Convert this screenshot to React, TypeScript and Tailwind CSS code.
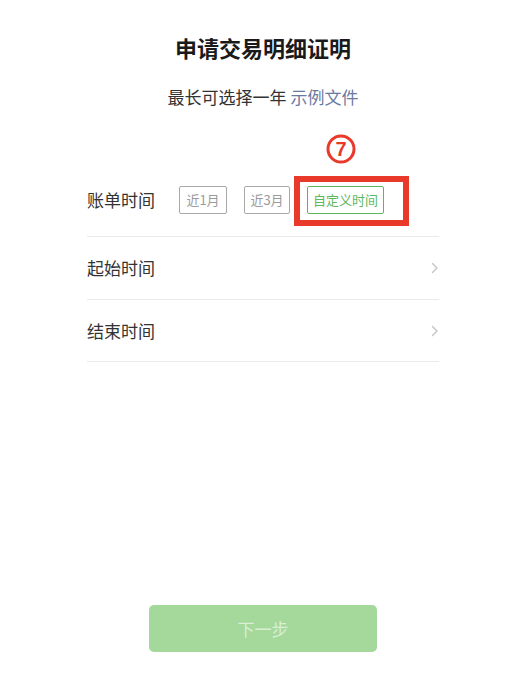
import React from 'react';

const font = { fontFamily: '"Noto Sans CJK SC", "Noto Sans", sans-serif' };

const Chevron: React.FC = () => (
  <svg width="8" height="12" viewBox="0 0 8 12" fill="none">
    <polyline points="1.5,1.5 6,6 1.5,10.5" stroke="#c8c8c8" strokeWidth="1.5" strokeLinecap="round" strokeLinejoin="round" />
  </svg>
);

const Chip: React.FC<{ label: string; width: string; active?: boolean }> = ({ label, width, active }) => (
  <div
    className={
      active
        ? `${width} h-[28px] flex items-center justify-center border border-[#5cb85c] text-[#5cb85c] text-[13px] rounded-[2px]`
        : `${width} h-[28px] flex items-center justify-center border border-[#a8a8a8] text-[#9a9a9a] text-[13px] rounded-[2px]`
    }
  >
    {label}
  </div>
);

export default function App() {
  return (
    <div className="w-full h-[688px] bg-white overflow-hidden" style={font}>
      <div className="ml-[11px] w-[504px] flex flex-col items-center">
        <h1 className="pt-[32px] text-[22px] leading-[30px] font-bold text-[#1a1a1a]">申请交易明细证明</h1>
        <p className="mt-[23px] text-[17px] leading-[24px] text-[#333333]">
          最长可选择一年 <span className="text-[#6b7aa1]">示例文件</span>
        </p>

        <div className="mt-[54px] w-[352px] flex flex-col">
          <div className="h-[74px] flex items-center border-b border-[#ebebeb]">
            <span className="text-[17px] text-[#333333] w-[70px]">账单时间</span>
            <div className="ml-[22px] flex items-center gap-[17px]">
              <Chip label="近1月" width="w-[48px]" />
              <Chip label="近3月" width="w-[46px]" />
              <div className="relative">
                <Chip label="自定义时间" width="w-[77px]" active />
                <div className="absolute left-[-13px] top-[-10px] w-[115px] h-[50px] border-[6px] border-[#e8392b]" />
                <svg className="absolute left-[19px] top-[-52px]" width="30" height="30" viewBox="0 0 30 30">
                  <circle cx="15" cy="15" r="13" fill="none" stroke="#e8392b" strokeWidth="3" />
                  <text x="15" y="22" textAnchor="middle" fontSize="20" fontWeight="700" fill="#e8392b" fontFamily="Liberation Sans, sans-serif">7</text>
                </svg>
              </div>
            </div>
          </div>

          <div className="h-[63px] flex items-center justify-between border-b border-[#ebebeb]">
            <span className="text-[17px] text-[#333333]">起始时间</span>
            <Chevron />
          </div>

          <div className="h-[62px] flex items-center justify-between border-b border-[#ebebeb]">
            <span className="text-[17px] text-[#333333]">结束时间</span>
            <Chevron />
          </div>
        </div>

        <button className="mt-[243px] w-[228px] h-[47px] rounded-[5px] bg-[#a5d89b] text-[17px] text-[#d9efd4]">
          下一步
        </button>
      </div>
    </div>
  );
}
